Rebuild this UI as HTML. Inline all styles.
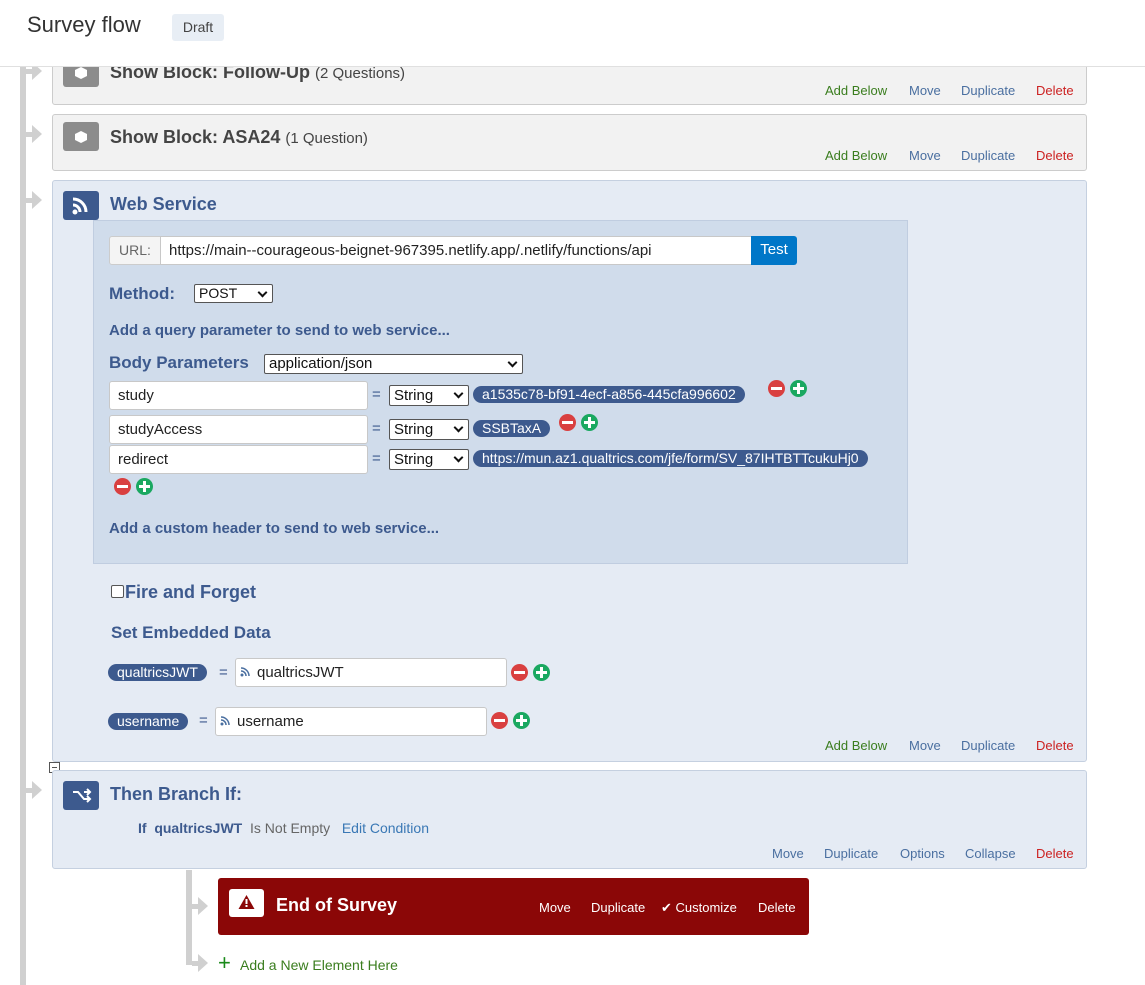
<!DOCTYPE html>
<html><head><meta charset="utf-8"><style>
*{box-sizing:border-box;margin:0;padding:0}
body{width:1145px;height:985px;position:relative;overflow:hidden;background:#fff;font-family:"Liberation Sans",sans-serif;color:#333}
.a{position:absolute}
.vl{background:#d0d0d0}
.arr{position:absolute;width:0;height:0;border-top:9px solid transparent;border-bottom:9px solid transparent;border-left:10px solid #d0d0d0}
.arrs{position:absolute;height:5px;background:#d0d0d0}
.blk{position:absolute;left:52px;width:1035px;border:1px solid #ccc;border-radius:3px;background:#f2f2f2}
.blu{background:#e5ebf4;border-color:#c5d0e0}
.ico{position:absolute;width:36px;height:29px;border-radius:3px;background:#8c8c8c}
.ttl{position:absolute;font-size:18px;font-weight:bold;color:#444}
.ttl span{font-weight:normal;font-size:15px}
.lk{position:absolute;font-size:13px}
.g{color:#3a7d1e}.b{color:#4a6fa0}.r{color:#cc2222}
.inp{position:absolute;background:#fff;border:1px solid #c8c8c8;border-radius:3px;font-size:15px;padding-left:8px;line-height:28px;color:#222}
.sel{position:absolute;background:#fff;border:1px solid #555;font-size:15px;padding-left:4px;color:#111;border-radius:2px}
.sel:after{content:"";position:absolute;right:6px;top:4px;width:5px;height:5px;border-right:2px solid #111;border-bottom:2px solid #111;transform:rotate(45deg)}
.pill{position:absolute;background:#3d5a8e;color:#fff;font-size:14px;border-radius:9px;padding:0 9px;height:17px;line-height:17px;white-space:nowrap}
.lbl{position:absolute;font-weight:bold;color:#3d5a8e}
.eq{position:absolute;font-size:15px;color:#3d5a8e}
.mc{position:absolute;width:17px;height:17px;border-radius:50%;background:#d94040}
.mc:after{content:"";position:absolute;left:3px;top:7px;width:11px;height:3px;background:#fff}
.pc{position:absolute;width:17px;height:17px;border-radius:50%;background:#1aa860}
.pc:before{content:"";position:absolute;left:3px;top:7px;width:11px;height:3px;background:#fff}
.pc:after{content:"";position:absolute;left:7px;top:3px;width:3px;height:11px;background:#fff}
</style></head><body>
<div class="a vl" style="left:20px;top:60px;width:6px;height:925px"></div>
<div class="arrs" style="left:26px;top:69px;width:6px"></div><div class="arr" style="left:32px;top:62px"></div>
<div class="arrs" style="left:26px;top:132px;width:6px"></div><div class="arr" style="left:32px;top:125px"></div>
<div class="arrs" style="left:26px;top:198px;width:6px"></div><div class="arr" style="left:32px;top:191px"></div>
<div class="arrs" style="left:26px;top:788px;width:6px"></div><div class="arr" style="left:32px;top:781px"></div>

<div class="blk" style="top:40px;height:65px">
 <div class="ico" style="left:10px;top:17px"><svg width="36" height="29"><path d="M18 9l6 3v6l-6 3-6-3v-6z" fill="#fff"/></svg></div>
 <div class="ttl" style="left:57px;top:21px">Show Block: Follow-Up <span>(2 Questions)</span></div>
 <div class="lk g" style="left:772px;top:42px">Add Below</div><div class="lk b" style="left:856px;top:42px">Move</div><div class="lk b" style="left:908px;top:42px">Duplicate</div><div class="lk r" style="left:983px;top:42px">Delete</div>
</div>
<div class="blk" style="top:114px;height:57px">
 <div class="ico" style="left:10px;top:7px"><svg width="36" height="29"><path d="M18 9l6 3v6l-6 3-6-3v-6z" fill="#fff"/></svg></div>
 <div class="ttl" style="left:57px;top:12px">Show Block: ASA24 <span>(1 Question)</span></div>
 <div class="lk g" style="left:772px;top:33px">Add Below</div><div class="lk b" style="left:856px;top:33px">Move</div><div class="lk b" style="left:908px;top:33px">Duplicate</div><div class="lk r" style="left:983px;top:33px">Delete</div>
</div>

<div class="a" style="left:0;top:0;width:1145px;height:67px;background:#fff;border-bottom:1px solid #e0e0e0"></div>
<div class="a" style="left:27px;top:12px;font-size:22px;color:#333">Survey flow</div>
<div class="a" style="left:172px;top:14px;width:52px;height:27px;background:#e8eef5;border-radius:3px;font-size:14px;line-height:27px;text-align:center;color:#444">Draft</div>

<div class="blk blu" style="top:180px;height:582px">
 <div class="ico" style="left:10px;top:10px;background:#3d5a8e"><svg width="36" height="29"><circle cx="12" cy="21" r="2.5" fill="#fff"/><path d="M10 14a7 7 0 0 1 7 7M10 8a13 13 0 0 1 13 13" stroke="#fff" stroke-width="3" fill="none"/></svg></div>
 <div class="ttl" style="left:57px;top:13px;color:#3d5a8e">Web Service</div>
 <div class="a" style="left:40px;top:39px;width:815px;height:344px;background:#d0dceb;border:1px solid #c0cde0"></div>
 <div class="lk g" style="left:772px;top:557px">Add Below</div><div class="lk b" style="left:856px;top:557px">Move</div><div class="lk b" style="left:908px;top:557px">Duplicate</div><div class="lk r" style="left:983px;top:557px">Delete</div>
</div>
<div class="a" style="left:109px;top:236px;width:52px;height:29px;background:#f4f4f4;border:1px solid #ccc;border-radius:3px 0 0 3px;font-size:14px;line-height:27px;text-align:center;color:#666">URL:</div>
<div class="inp" style="left:160px;top:236px;width:592px;height:29px;border-radius:0">https://main--courageous-beignet-967395.netlify.app/.netlify/functions/api</div>
<div class="a" style="left:751px;top:236px;width:46px;height:29px;background:#0077c8;color:#fff;font-size:15px;line-height:27px;text-align:center;border-radius:0 3px 3px 0">Test</div>
<div class="lbl" style="left:109px;top:284px;font-size:17px">Method:</div>
<div class="sel" style="left:194px;top:284px;width:79px;height:19px;font-size:14px;line-height:17px">POST</div>
<div class="lbl" style="left:109px;top:322px;font-size:15px">Add a query parameter to send to web service...</div>
<div class="lbl" style="left:109px;top:353px;font-size:17px">Body Parameters</div>
<div class="sel" style="left:264px;top:354px;width:259px;height:20px;font-size:15px;line-height:18px">application/json</div>

<div class="inp" style="left:109px;top:381px;width:259px;height:29px">study</div>
<div class="eq" style="left:372px;top:386px">=</div>
<div class="sel" style="left:389px;top:385px;width:80px;height:21px;line-height:19px">String</div>
<div class="pill" style="left:473px;top:386px">a1535c78-bf91-4ecf-a856-445cfa996602</div>
<div class="mc" style="left:768px;top:380px"></div><div class="pc" style="left:790px;top:380px"></div>

<div class="inp" style="left:109px;top:415px;width:259px;height:29px">studyAccess</div>
<div class="eq" style="left:372px;top:420px">=</div>
<div class="sel" style="left:389px;top:419px;width:80px;height:21px;line-height:19px">String</div>
<div class="pill" style="left:473px;top:420px">SSBTaxA</div>
<div class="mc" style="left:559px;top:414px"></div><div class="pc" style="left:581px;top:414px"></div>

<div class="inp" style="left:109px;top:445px;width:259px;height:29px">redirect</div>
<div class="eq" style="left:372px;top:450px">=</div>
<div class="sel" style="left:389px;top:449px;width:80px;height:21px;line-height:19px">String</div>
<div class="pill" style="left:473px;top:450px">https://mun.az1.qualtrics.com/jfe/form/SV_87IHTBTTcukuHj0</div>
<div class="mc" style="left:114px;top:478px"></div><div class="pc" style="left:136px;top:478px"></div>

<div class="lbl" style="left:109px;top:520px;font-size:15px">Add a custom header to send to web service...</div>

<div class="a" style="left:111px;top:585px;width:13px;height:13px;border:1px solid #555;border-radius:2px;background:#fff"></div>
<div class="lbl" style="left:125px;top:582px;font-size:18px">Fire and Forget</div>
<div class="lbl" style="left:111px;top:623px;font-size:17px">Set Embedded Data</div>

<div class="pill" style="left:108px;top:664px">qualtricsJWT</div>
<div class="eq" style="left:219px;top:664px">=</div>
<div class="inp" style="left:235px;top:658px;width:272px;height:29px;padding-left:21px">qualtricsJWT</div>
<svg class="a" style="left:240px;top:667px" width="10" height="10"><circle cx="2" cy="8" r="1.5" fill="#4a6fa0"/><path d="M1 4a5 5 0 0 1 5 5M1 1a8 8 0 0 1 8 8" stroke="#4a6fa0" stroke-width="1.5" fill="none"/></svg>
<div class="mc" style="left:511px;top:664px"></div><div class="pc" style="left:533px;top:664px"></div>

<div class="pill" style="left:108px;top:713px">username</div>
<div class="eq" style="left:199px;top:712px">=</div>
<div class="inp" style="left:215px;top:707px;width:272px;height:29px;padding-left:21px">username</div>
<svg class="a" style="left:220px;top:716px" width="10" height="10"><circle cx="2" cy="8" r="1.5" fill="#4a6fa0"/><path d="M1 4a5 5 0 0 1 5 5M1 1a8 8 0 0 1 8 8" stroke="#4a6fa0" stroke-width="1.5" fill="none"/></svg>
<div class="mc" style="left:491px;top:712px"></div><div class="pc" style="left:513px;top:712px"></div>

<div class="a" style="left:49px;top:762px;width:11px;height:11px;border:1px solid #555;background:#fff"><div style="position:absolute;left:2px;top:4px;width:5px;height:1px;background:#555"></div></div>
<div class="blk blu" style="top:770px;height:99px">
 <div class="ico" style="left:10px;top:10px;background:#3d5a8e"><svg width="36" height="29"><path d="M10 11h5l6 7h5M21 11h5M24 8l3 3-3 3M24 15l3 3-3 3" stroke="#fff" stroke-width="2" fill="none"/></svg></div>
 <div class="ttl" style="left:57px;top:13px;color:#3d5a8e">Then Branch If:</div>
 <div class="a" style="left:85px;top:49px;font-size:14px;color:#3d5a8e"><b>If&nbsp; qualtricsJWT</b>&nbsp; <span style="color:#666">Is Not Empty</span>&nbsp;&nbsp; <span style="color:#3a78b5">Edit Condition</span></div>
 <div class="lk b" style="left:719px;top:75px">Move</div><div class="lk b" style="left:771px;top:75px">Duplicate</div><div class="lk b" style="left:847px;top:75px">Options</div><div class="lk b" style="left:912px;top:75px">Collapse</div><div class="lk r" style="left:983px;top:75px">Delete</div>
</div>

<div class="a vl" style="left:186px;top:870px;width:6px;height:95px"></div>
<div class="arrs" style="left:192px;top:904px;width:6px"></div><div class="arr" style="left:198px;top:897px"></div>
<div class="arrs" style="left:192px;top:961px;width:6px"></div><div class="arr" style="left:198px;top:954px"></div>

<div class="a" style="left:218px;top:878px;width:591px;height:57px;background:#8b0707;border-radius:3px"></div>
<div class="a" style="left:229px;top:889px;width:35px;height:28px;background:#fff;border-radius:3px"><svg width="35" height="28"><path d="M17.5 6l8 14h-16z" fill="#8b0707"/><rect x="16.5" y="10" width="2" height="5" fill="#fff"/><rect x="16.5" y="16" width="2" height="2" fill="#fff"/></svg></div>
<div class="a" style="left:276px;top:895px;font-size:18px;font-weight:bold;color:#fff">End of Survey</div>
<div class="a" style="left:539px;top:900px;font-size:13px;color:#fff">Move</div>
<div class="a" style="left:591px;top:900px;font-size:13px;color:#fff">Duplicate</div>
<div class="a" style="left:661px;top:900px;font-size:13px;color:#fff">✔ Customize</div>
<div class="a" style="left:758px;top:900px;font-size:13px;color:#fff">Delete</div>

<div class="a" style="left:218px;top:952px;font-size:22px;color:#1a8a1a;line-height:22px">+</div>
<div class="a" style="left:240px;top:957px;font-size:14px;color:#3a7d1e">Add a New Element Here</div>
</body></html>
